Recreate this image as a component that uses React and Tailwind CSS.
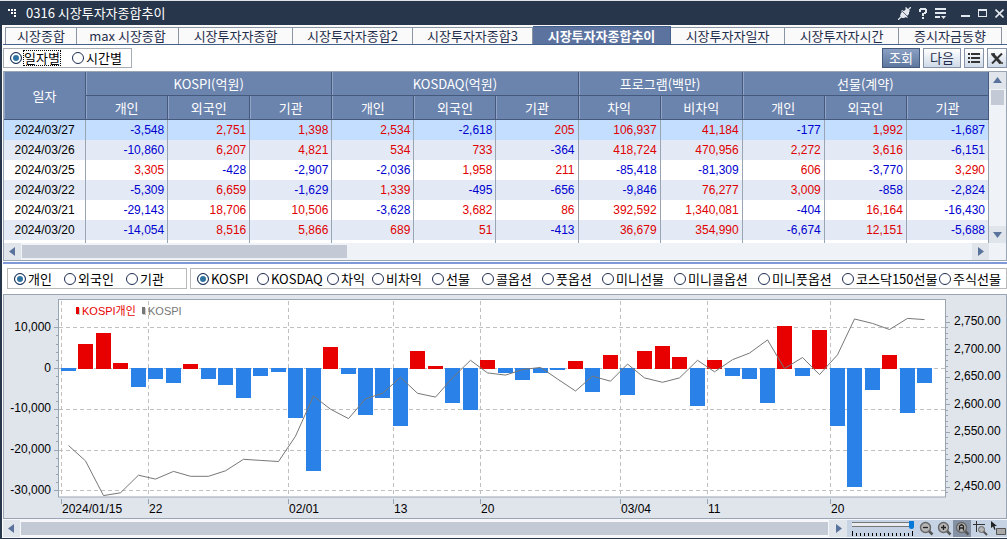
import { useState } from 'react';
import clsx from 'clsx';

const TABS = [
  { label: '시장종합', width: 'w-[72px]' },
  { label: 'max 시장종합', width: 'w-[102px]' },
  { label: '시장투자자종합', width: 'w-[114px]' },
  { label: '시장투자자종합2', width: 'w-[120px]' },
  { label: '시장투자자종합3', width: 'w-[120px]' },
  { label: '시장투자자종합추이', width: 'w-[138px]' },
  { label: '시장투자자일자', width: 'w-[114px]' },
  { label: '시장투자자시간', width: 'w-[114px]' },
  { label: '증시자금동향', width: 'w-[103px]' },
];

const GROUPS = [
  { label: 'KOSPI(억원)', cols: ['개인', '외국인', '기관'] },
  { label: 'KOSDAQ(억원)', cols: ['개인', '외국인', '기관'] },
  { label: '프로그램(백만)', cols: ['차익', '비차익'] },
  { label: '선물(계약)', cols: ['개인', '외국인', '기관'] },
];

const ROWS = [
  ['2024/03/27', -3548, 2751, 1398, 2534, -2618, 205, 106937, 41184, -177, 1992, -1687],
  ['2024/03/26', -10860, 6207, 4821, 534, 733, -364, 418724, 470956, 2272, 3616, -6151],
  ['2024/03/25', 3305, -428, -2907, -2036, 1958, 211, -85418, -81309, 606, -3770, 3290],
  ['2024/03/22', -5309, 6659, -1629, 1339, -495, -656, -9846, 76277, 3009, -858, -2824],
  ['2024/03/21', -29143, 18706, 10506, -3628, 3682, 86, 392592, 1340081, -404, 16164, -16430],
  ['2024/03/20', -14054, 8516, 5866, 689, 51, -413, 36679, 354990, -6674, 12151, -5688],
];

const INVESTORS = [
  { label: '개인', width: 'w-[50px]' },
  { label: '외국인', width: 'w-[62px]' },
  { label: '기관', width: 'w-[50px]' },
];

const MARKETS = [
  { label: 'KOSPI', width: 'w-[60px]' },
  { label: 'KOSDAQ', width: 'w-[70px]' },
  { label: '차익', width: 'w-[45px]' },
  { label: '비차익', width: 'w-[60px]' },
  { label: '선물', width: 'w-[50px]' },
  { label: '콜옵션', width: 'w-[60px]' },
  { label: '풋옵션', width: 'w-[60px]' },
  { label: '미니선물', width: 'w-[72px]' },
  { label: '미니콜옵션', width: 'w-[84px]' },
  { label: '미니풋옵션', width: 'w-[84px]' },
  { label: '코스닥150선물', width: 'w-[97px]' },
  { label: '주식선물', width: 'w-[64px]' },
];

const NET_BUY = [
  -600, 6000, 8700, 1300, -4500, -2600, -3600, 1100, -2600, -4000,
  -7200, -1800, -900, -12100, -25100, 5300, -1300, -11400, -7200, -14100,
  4300, 600, -8500, -10200, 2100, -1100, -2800, -1100, -400, 1800,
  -5800, 3300, -6500, 4300, 5500, 2800, -9200, 2100, -1800, -2600,
  -8500, 10400, -1800, 9400, -14054, -29143, -5309, 3305, -10860, -3548,
];

const KOSPI = [
  2526, 2498, 2435, 2440, 2472, 2465, 2479, 2470, 2470, 2480,
  2501, 2499, 2497, 2543, 2616, 2592, 2575, 2611, 2621, 2650,
  2621, 2614, 2649, 2681, 2658, 2654, 2664, 2668, 2647, 2625,
  2652, 2643, 2674, 2649, 2641, 2649, 2681, 2660, 2682, 2694,
  2718, 2666, 2686, 2655, 2691, 2756, 2748, 2737, 2757, 2755,
];

const DATES = [
  { i: 0, label: '2024/01/15' },
  { i: 5, label: '22' },
  { i: 13, label: '02/01' },
  { i: 19, label: '13' },
  { i: 24, label: '20' },
  { i: 32, label: '03/04' },
  { i: 37, label: '11' },
  { i: 44, label: '20' },
];

const range = (from, to, step) =>
  Array.from({ length: Math.round((to - from) / step) + 1 }, (_, i) => from + i * step);

function Radio({ name, label, checked, onChange, width, focused }) {
  return (
    <label className={clsx('flex shrink-0 items-center gap-0.5 whitespace-nowrap', width)}>
      <input
        type="radio"
        name={name}
        checked={checked}
        onChange={onChange}
        className="size-3 shrink-0 appearance-none rounded-full border border-[#1f2d52] bg-white checked:bg-[#2f74a0] checked:shadow-[inset_0_0_0_2px_white]"
      />
      <span className={clsx('leading-[14px]', focused && 'outline-1 outline-dotted outline-black')}>{label}</span>
    </label>
  );
}

function RadioGroup({ name, items, className }) {
  const [value, setValue] = useState(items[0].label);
  return (
    <div className={clsx('flex h-[21px] items-center border border-[#b9b9b9] bg-white pl-1.5', className)}>
      {items.map(item => (
        <Radio key={item.label} name={name} {...item} checked={value === item.label} onChange={() => setValue(item.label)} />
      ))}
    </div>
  );
}

function Arrow({ d }) {
  return (
    <svg width="9" height="9" viewBox="0 0 9 9" fill="#5a739c" aria-hidden="true">
      <path d={d} />
    </svg>
  );
}

const LEFT = 'M7 0v9L1 4.5z';
const RIGHT = 'M2 0v9l6-4.5z';
const UP = 'M0 7h9L4.5 1z';
const DOWN = 'M0 2h9L4.5 8z';

function TitleBar() {
  return (
    <header className="flex h-6 items-center bg-[#27364b] pl-[7px] pr-[3px] text-white">
      <svg width="10" height="9" viewBox="0 0 10 9" fill="#fff" aria-hidden="true">
        <path d="M1 0h2v2H1zM4 0h2v2H4zM7 0h2v2H7zM4 3h2v2H4zM7 3h2v2H7zM7 6h2v2H7z" />
      </svg>
      <h1 className="ml-[9px] flex-1">0316 시장투자자종합추이</h1>
      <div className="flex items-center text-[#e3e7ee]">
        <button type="button" aria-label="연결" className="mr-2">
          <svg width="13" height="13" viewBox="0 0 13 13">
            <path d="M0 13l4-4M9 4l4-4" stroke="currentColor" strokeWidth="1.3" />
            <path d="M3 6l1-1-1-1 1-1 2 1 2-2-1-1 1-1 4 4-1 1v2L9 9l1 1-1 1-1-1-2 1H4L2 9z" fill="currentColor" />
            <path d="M3.500 3.500l7 7" stroke="#27364b" strokeWidth=".7" />
          </svg>
        </button>
        <button type="button" aria-label="도움말" className="mr-2">
          <svg width="8" height="11" viewBox="0 0 8 11" fill="currentColor">
            <path d="M1 0h6v1h1v4H7v1H5v2H3V5h2V4h1V2H2v2H0V1h1zM3 9h2v2H3z" />
          </svg>
        </button>
        <button type="button" aria-label="메뉴" className="mr-[14px]">
          <svg width="12" height="11" viewBox="0 0 12 11" fill="currentColor">
            <path d="M0 0h11v2H0zM0 4h11v2H0zM0 8h5v2H0zM6 8h5L8.500 11z" />
          </svg>
        </button>
        <button type="button" aria-label="최소화" className="mr-2">
          <svg width="9" height="10" viewBox="0 0 9 10" fill="currentColor"><path d="M0 7h9v2H0z" /></svg>
        </button>
        <button type="button" aria-label="최대화" className="mr-2">
          <svg width="9" height="8" viewBox="0 0 9 8" fill="currentColor"><path fillRule="evenodd" d="M0 0h9v8H0zM1 2v5h7V2z" /></svg>
        </button>
        <button type="button" aria-label="닫기">
          <svg width="9" height="9" viewBox="0 0 9 9" fill="none" stroke="currentColor" strokeWidth="1.600"><path d="M.5.5l8 8M8.500.5l-8 8" /></svg>
        </button>
      </div>
    </header>
  );
}

function Tabs() {
  const [active, setActive] = useState('시장투자자종합추이');
  return (
    <nav className="flex h-5 items-end border-b border-[#44618c] bg-[#fafafa] pl-0.5">
      {TABS.map(tab => (
        <button
          key={tab.label}
          type="button"
          onClick={() => setActive(tab.label)}
          className={clsx(
            'whitespace-nowrap border-t border-r',
            tab.width,
            tab.label === '시장종합' && 'border-l',
            active === tab.label
              ? 'h-[18px] border-[#44618c] bg-[#5c739f] font-bold text-white'
              : 'h-[17px] border-[#8a94a3] bg-[#fafafa] text-[#1f2d4a]'
          )}
        >
          {tab.label}
        </button>
      ))}
    </nav>
  );
}

const lightButton = 'flex h-[20px] items-center justify-center border border-[#8794a8] bg-linear-to-b from-white to-[#cfdae8] text-[#1f2d4a]';

function Toolbar() {
  const [mode, setMode] = useState('day');
  return (
    <div className="flex items-start pt-[3px] pb-[3px]">
      <div className="flex h-[20px] w-[129px] items-center border border-[#a8adb5] pl-1.5">
        <Radio name="mode" label="일자별" width="w-[62px]" focused checked={mode === 'day'} onChange={() => setMode('day')} />
        <Radio name="mode" label="시간별" width="w-[56px]" checked={mode === 'time'} onChange={() => setMode('time')} />
      </div>
      <div className="ml-auto flex gap-[3px]">
        <button type="button" className="h-[20px] w-[38px] border border-[#44597c] bg-linear-to-b from-[#8aa0c3] to-[#5f779f] text-white">조회</button>
        <button type="button" className={clsx(lightButton, 'w-[38px]')}>다음</button>
        <button type="button" aria-label="목록" className={clsx(lightButton, 'w-5')}>
          <svg width="12" height="10" viewBox="0 0 12 10" fill="#333" shapeRendering="crispEdges">
            <path d="M0 0h2v2H0zM3 0h9v2H3zM0 4h2v2H0zM3 4h9v2H3zM0 8h2v2H0zM3 8h9v2H3z" />
          </svg>
        </button>
        <button type="button" aria-label="엑셀" className={clsx(lightButton, 'w-5')}>
          <svg width="12" height="11" viewBox="0 0 12 11" fill="none" stroke="#333">
            <path d="M1.500 1l8 9" strokeWidth="3" />
            <path d="M11 .5L1 10.500" strokeWidth="2" />
            <path d="M8 10h4M0 1h4" strokeWidth="1.500" />
          </svg>
        </button>
      </div>
    </div>
  );
}

const headCell = 'border-r border-b border-[#44597c] bg-[#6b84ae] p-0 font-normal text-white shadow-[inset_1px_0_0_#8fa4c6]';

function DataTable() {
  return (
    <section className="border border-[#9aa5b3]">
      <div className="flex">
        <div className="min-w-0 flex-1">
          <table className="w-full table-fixed border-separate border-spacing-0">
            <colgroup>
              {ROWS[0].map((_, c) => <col key={c} className="w-1/12" />)}
            </colgroup>
            <thead>
              <tr className="h-6">
                <th rowSpan={2} className={headCell}>일자</th>
                {GROUPS.map(g => <th key={g.label} colSpan={g.cols.length} className={headCell}>{g.label}</th>)}
              </tr>
              <tr className="h-6">
                {GROUPS.map(g => g.cols.map(c => <th key={g.label + c} className={headCell}>{c}</th>))}
              </tr>
            </thead>
            <tbody className="font-['Liberation_Sans',sans-serif] text-[12px] leading-5">
              {ROWS.map(([date, ...values], r) => (
                <tr key={date} className={clsx('h-5', r === 0 ? 'bg-[#c3deff]' : r % 2 ? 'bg-[#e3eaf6]' : 'bg-white')}>
                  <td className="border-r border-[#9aa5b3] p-0 text-center text-black">{date}</td>
                  {values.map((v, c) => (
                    <td
                      key={c}
                      className={clsx('border-r border-[#9aa5b3] p-0 pr-[3px] text-right', v < 0 ? 'text-[#0000d0]' : 'text-[#e00000]')}
                    >
                      {v.toLocaleString('en-US')}
                    </td>
                  ))}
                </tr>
              ))}
              <tr className="h-[3px]">
                {ROWS[0].map((_, c) => <td key={c} className="border-r border-[#9aa5b3] p-0" />)}
              </tr>
            </tbody>
          </table>
        </div>
        <div className="flex w-[17px] flex-col items-center bg-[#eff3f8]">
          <button type="button" aria-label="위로" className="flex h-[17px] w-full items-center justify-center bg-[#e0e5ec]"><Arrow d={UP} /></button>
          <div className="mt-px h-[15px] w-[13px] bg-[#c3c9d5]" />
          <button type="button" aria-label="아래로" className="mt-auto flex h-[17px] w-full items-center justify-center bg-[#e0e5ec]"><Arrow d={DOWN} /></button>
        </div>
      </div>
      <div className="flex h-[17px] items-center bg-[#eff3f8] pr-[17px]">
        <button type="button" aria-label="왼쪽" className="flex h-full w-[17px] items-center justify-center bg-[#e0e5ec]"><Arrow d={LEFT} /></button>
        <div className="ml-px h-[13px] w-[33%] bg-[#c3c9d5]" />
        <button type="button" aria-label="오른쪽" className="ml-auto flex h-full w-[17px] items-center justify-center bg-[#e0e5ec]"><Arrow d={RIGHT} /></button>
      </div>
    </section>
  );
}

const PLOT = { left: 55, right: 941, top: 4, bottom: 202 };
const barX = i => 57 + Math.round((i * 856) / 49);
const netY = v => 73.5 - v * 0.00408;
const idxY = v => 27.3 + (2750 - v) * 0.55;

function Chart() {
  const line = KOSPI.map((v, i) => `${barX(i) + 7.5},${idxY(v).toFixed(1)}`).join(' ');
  return (
    <div className="border border-[#9aa5b3] bg-[#e0e5ec]">
      <svg viewBox="0 0 1002 223" className="block w-full font-['Liberation_Sans','Noto_Sans_CJK_KR',sans-serif] text-[12px]" role="img" aria-label="KOSPI 개인 순매수 추이">
        <rect x={PLOT.left - 0.5} y={PLOT.top + 0.5} width={PLOT.right - PLOT.left + 1} height={PLOT.bottom - PLOT.top - 0.5} fill="#fff" stroke="#9aa5b3" />

        <g stroke="#c0c0c0" strokeDasharray="4 3" shapeRendering="crispEdges">
          {range(-30000, 10000, 10000).map(v => <line key={v} x1={PLOT.left} x2={PLOT.right} y1={netY(v)} y2={netY(v)} />)}
          {DATES.map(d => <line key={d.i} x1={barX(d.i) + 0.5} x2={barX(d.i) + 0.5} y1={PLOT.top + 2} y2={PLOT.bottom - 2} />)}
        </g>

        <g shapeRendering="crispEdges">
          {NET_BUY.map((v, i) => (
            <rect
              key={i}
              x={barX(i)}
              y={v > 0 ? Math.round(netY(v)) : 73}
              width="15"
              height={v > 0 ? 74 - Math.round(netY(v)) : Math.round(netY(v)) - 73}
              fill={v > 0 ? '#e80000' : '#2a82e8'}
            />
          ))}
        </g>
        <polyline points={line} fill="none" stroke="#777" />

        <g stroke="#9aa5b3" shapeRendering="crispEdges">
          {range(-30000, 12000, 2000).map(v => (
            <line key={v} x1={v % 10000 ? 52 : 50} x2="54" y1={netY(v)} y2={netY(v)} />
          ))}
          {range(2440, 2760, 10).map(v => (
            <line key={v} x1="942" x2={v % 50 ? 944 : 946} y1={idxY(v)} y2={idxY(v)} />
          ))}
          {DATES.map(d => <line key={d.i} x1={barX(d.i) + 0.5} x2={barX(d.i) + 0.5} y1="204" y2="209" />)}
        </g>

        {range(-30000, 10000, 10000).map(v => (
          <text key={v} x="47" y={Math.round(netY(v)) + 3} textAnchor="end">{v.toLocaleString('en-US')}</text>
        ))}
        {range(2450, 2750, 50).map(v => (
          <text key={v} x="950" y={Math.round(idxY(v)) + 3}>{v.toLocaleString('en-US', { minimumFractionDigits: 2 })}</text>
        ))}
        {DATES.map(d => <text key={d.i} x={barX(d.i) + 1} y="218">{d.label}</text>)}

        <path d="M73 13h3v7h-3z" fill="#c8c8c8" />
        <path d="M72 12h3v7h-3z" fill="#e80000" />
        <text x="78" y="20" fill="#e80000" className="text-[11px]">KOSPI개인</text>
        <path d="M139 13h3v7h-3z" fill="#c8c8c8" />
        <path d="M138 12h3v7h-3z" fill="#777" />
        <text x="144" y="20" fill="#777" className="text-[11px]">KOSPI</text>
      </svg>
    </div>
  );
}

function Magnifier({ label, active, children }) {
  return (
    <button type="button" aria-label={label} className={clsx('flex h-[17px] w-[18px] items-center justify-center', active && 'bg-[#8592a5]')}>
      <svg width="15" height="15" viewBox="0 0 15 15">
        <path d="M9.500 9.500l4 4" stroke="#555" strokeWidth="2.500" />
        <circle cx="6.500" cy="6.500" r="5" fill="#b5b5b5" stroke="#666" strokeWidth="1.400" />
        <path d={children} fill="none" stroke="#222" strokeWidth="1.300" />
      </svg>
    </button>
  );
}

function ChartFooter() {
  return (
    <div className="flex h-[19px] items-center bg-[#f5f7fa]">
      <button type="button" aria-label="이전" className="flex h-[17px] w-[17px] items-center justify-center bg-[#e0e5ec]"><Arrow d={LEFT} /></button>
      <div className="mx-px h-[13px] flex-1 bg-[#c3c9d5]" />
      <button type="button" aria-label="다음" className="flex h-[17px] w-[18px] items-center justify-center bg-[#e0e5ec]"><Arrow d={RIGHT} /></button>
      <div className="flex h-[17px] w-[160px] items-center bg-[#c6d3e4] pl-[5px]">
        <div className="flex w-[62px] flex-col gap-0.5">
          <input
            type="range"
            aria-label="확대 비율"
            defaultValue="100"
            className="h-[8px] w-full appearance-none bg-[linear-gradient(#777_1px,#e8ecf0_1px,#e8ecf0_4px,#777_4px)] bg-[size:100%_5px] bg-[position:0_1px] bg-no-repeat [&::-webkit-slider-thumb]:h-[8px] [&::-webkit-slider-thumb]:w-[5px] [&::-webkit-slider-thumb]:appearance-none [&::-webkit-slider-thumb]:rounded-b-sm [&::-webkit-slider-thumb]:bg-[#0078d7]"
          />
          <svg width="62" height="5" viewBox="0 0 62 5" aria-hidden="true">
            <path d="M.5 0v5M60.500 0v5" stroke="#000" />
            <path d="M4 3.500h56" stroke="#000" strokeWidth="3" strokeDasharray="1 3" />
          </svg>
        </div>
        <div className="ml-[3px] flex">
          <Magnifier label="축소">M4 6.5h5</Magnifier>
          <Magnifier label="확대">M4 6.5h5M6.500 4v5</Magnifier>
          <Magnifier label="전체" active>M4.500 9.500V5l2-1.500L8.500 5v4.500M4.500 7h4</Magnifier>
          <button type="button" aria-label="영역 확대" className="flex h-[17px] w-[18px] items-center justify-center">
            <svg width="15" height="15" viewBox="0 0 15 15" fill="none">
              <path d="M3.500 0v11M0 3.500h12" stroke="#333" />
              <path d="M10 10l4 4" stroke="#555" strokeWidth="2" />
              <circle cx="8.500" cy="8.500" r="3" fill="#b5b5b5" stroke="#666" />
            </svg>
          </button>
          <button type="button" aria-label="선택" className="flex h-[17px] w-[18px] items-center justify-center">
            <svg width="15" height="15" viewBox="0 0 15 15">
              <path d="M0 0v7l2-1.500L3.500 9l1-.5L3.500 5H6z" fill="#222" />
              <path d="M5.500 7.500h9v6h-9z" fill="#aaa" stroke="#555" />
            </svg>
          </button>
        </div>
      </div>
    </div>
  );
}

export default function App() {
  return (
    <div className="border-t border-b border-t-[#dfe3ea] border-b-[#27364b] bg-white font-['Noto_Sans_CJK_KR',sans-serif] text-[13px] leading-4 text-black">
      <TitleBar />
      <main className="border-l-2 border-[#27364b] pl-px">
        <Tabs />
        <Toolbar />
        <DataTable />
        <div className="mt-px h-0.5 bg-[#7f98d8]" />
        <div className="flex gap-[3px] py-1 pl-1">
          <RadioGroup name="investor" items={INVESTORS} className="w-[180px]" />
          <RadioGroup name="market" items={MARKETS} className="min-w-0 flex-1" />
        </div>
        <div className="pt-px">
          <Chart />
        </div>
        <ChartFooter />
      </main>
    </div>
  );
}
